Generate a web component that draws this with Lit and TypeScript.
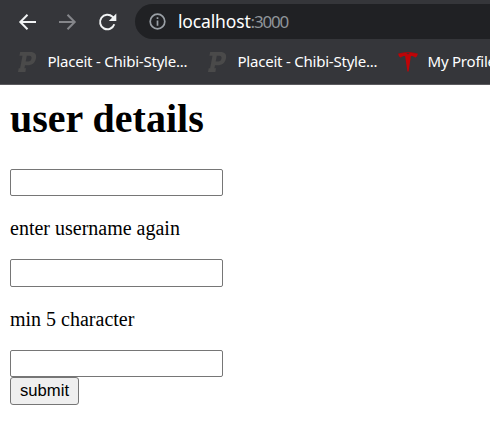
import { LitElement, html, css, svg } from "lit";
import { customElement } from "lit/decorators.js";

const placeit = svg`<path fill="#4a4a4a" fill-rule="evenodd" d="M2.2 0H12.5C16.7 0 18.8 2.3 18 6.2C17.2 10.6 14.2 13.2 9.7 13.2H7L6.4 16.3H8L7.4 20H0L.7 16.3H2.1L4.5 3.8H1.4ZM8.8 3.8L7.7 9.5H10.2C12.1 9.5 13.2 8.4 13.5 6.5C13.8 4.8 13.1 3.8 11.4 3.8Z"/>`;
const tesla = svg`<path fill="#980e12" d="M0 1.6C6-.5 14-.5 20 1.6L19.6 2.4C14 .7 6 .7 .4 2.4Z"/><path fill="#c00407" d="M.3 2.2C4 1 7 .9 8.2 1L10 2.6L11.8 1C13 .9 16 1 19.7 2.2C19.3 4.2 18.4 5.2 17 5.6C16.2 4.5 15 4.2 12.9 4.1L10.6 19.5H9.4L7.1 4.1C5 4.2 3.8 4.5 3 5.6C1.6 5.2 .7 4.2 .3 2.2Z"/>`;

@customElement("browser-bar")
class BrowserBar extends LitElement {
  static styles = css`
    :host { display: block; height: 85px; box-sizing: border-box; overflow: hidden;
      background: #35363a; border-bottom: 1px solid #5b5a5e; color: #fff;
      font-family: "Noto Sans", "Open Sans", sans-serif; }
    svg { display: block; flex: none; }
    .toolbar { display: flex; align-items: center; height: 35px; padding: 4px 0 0 17px; }
    .nav { width: 20px; height: 20px; margin-right: 20px; fill: none; stroke: #f1f3f4; stroke-width: 2; }
    .forward { stroke: #85868a; }
    .reload { margin-right: 18px; }
    .address { flex: 1; height: 35px; display: flex; align-items: center; background: #202124;
      border-radius: 18px 0 0 18px; padding-left: 14px; }
    .info { width: 17px; height: 17px; margin-right: 12px; fill: none; stroke: #9aa0a6; stroke-width: 1.7; }
    .url { font-size: 17.5px; line-height: 35px; letter-spacing: -0.15px; white-space: nowrap; }
    .port { color: #8f9499; font-size: 17px; letter-spacing: -1.2px; }
    .bookmarks { display: flex; height: 45px; padding-left: 18px; }
    .bookmark { display: flex; align-items: center; flex: none; width: 190px; white-space: nowrap; }
    .bookmark svg { width: 20px; height: 20px; margin-right: 9.5px; }
    .label { font-size: 15px; line-height: 20px; letter-spacing: -0.22px; padding-bottom: 1px; }
  `;
  render() {
    return html`
      <div class="toolbar">
        <svg class="nav" viewBox="0 0 20 20"><path d="M19 10H3.5M10.5 2.8L3.3 10L10.5 17.2"/></svg>
        <svg class="nav forward" viewBox="0 0 20 20"><path d="M2 10H17.5M10.5 2.8L17.7 10L10.5 17.2"/></svg>
        <svg class="nav reload" viewBox="0 0 20 20"><path d="M17.3 12.3A7.3 7.3 0 1 1 15.5 4.8L17 6.3"/><path fill="#f1f3f4" stroke="none" d="M19.3 1.5V9H11.8Z"/></svg>
        <div class="address">
          <svg class="info" viewBox="0 0 17 17"><circle cx="8.5" cy="8.5" r="7.3"/><path d="M8.5 7.5V12.7M8.5 4.3V6"/></svg>
          <span class="url">localhost<span class="port">:3000</span></span>
        </div>
      </div>
      <div class="bookmarks">
        ${[["Placeit - Chibi-Style...", placeit], ["Placeit - Chibi-Style...", placeit], ["My Profile", tesla]].map(
          ([label, icon]) => html`<div class="bookmark"><svg viewBox="0 0 20 20">${icon}</svg><span class="label">${label}</span></div>`
        )}
      </div>`;
  }
}

@customElement("app-root")
class AppRoot extends LitElement {
  static styles = css`
    :host { display: block; height: 436px; overflow: hidden; background: #fff; color: #000;
      font-family: "Liberation Serif", serif; }
    form { display: flex; flex-direction: column; align-items: flex-start; padding: 11px 10px 0; }
    h1 { margin: 0 0 27px; font-size: 40px; line-height: 46px; }
    p { margin: 20px 0 19px; font-size: 20px; line-height: 24px; }
    input { box-sizing: border-box; width: 213px; height: 27px; margin: 0; padding: 1px 2px;
      border: 1px solid #767676; border-radius: 2px; background: #fff; outline: none; }
    .tall { height: 28px; }
    button { box-sizing: border-box; width: 69px; height: 28px; margin: 0; padding: 0;
      border: 1px solid #767676; border-radius: 3px; background: #efefef; color: #000;
      font: 16.67px/24px "Liberation Sans", sans-serif; }
  `;
  render() {
    return html`
      <browser-bar></browser-bar>
      <form>
        <h1>user details</h1>
        <input type="text">
        <p>enter username again</p>
        <input type="text" class="tall">
        <p>min 5 character</p>
        <input type="text">
        <button type="button">submit</button>
      </form>`;
  }
}
